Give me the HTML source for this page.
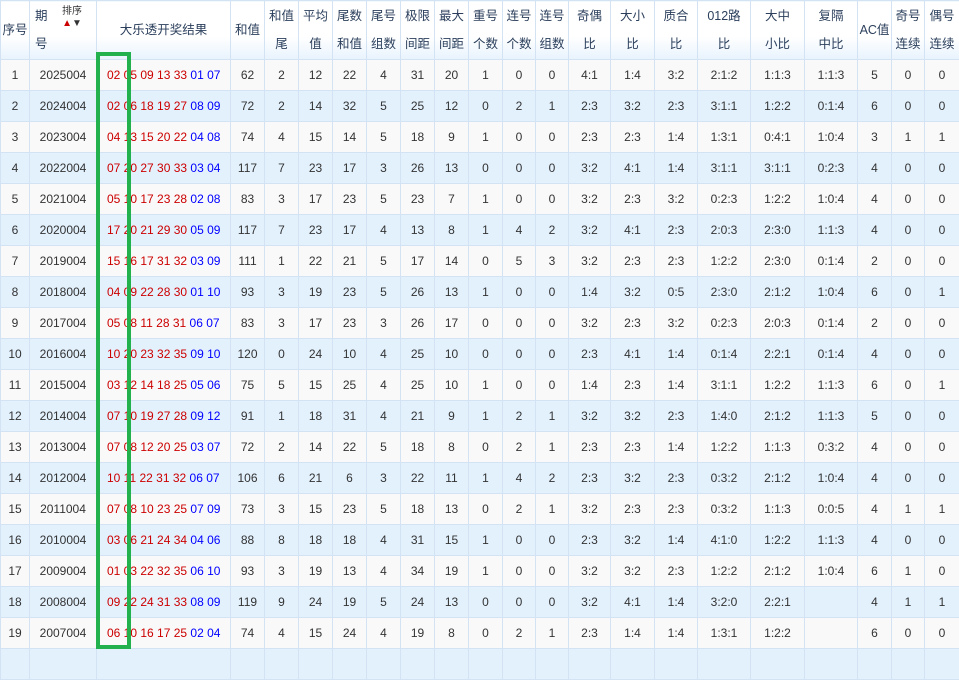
<!DOCTYPE html>
<html><head><meta charset="utf-8">
<style>
body{margin:0;width:959px;height:654px;overflow:hidden;background:#fff;font-family:"Liberation Sans","Noto Sans CJK SC",sans-serif;}
table{border-collapse:collapse;table-layout:fixed;width:959px;position:absolute;left:0;top:0;}
td,th{border:1px solid #d3e3f3;text-align:center;font-size:12px;color:#333;padding:0;height:30px;white-space:nowrap;overflow:hidden;}
th{height:58px;font-weight:normal;color:#2b3f5c;background:linear-gradient(#fff 0%,#fff 60%,#e8f3fd 100%);line-height:28px;font-size:12.5px}
tr.o td{background:#f9f9f9}
tr.e td{background:#e3f1fd}
td.b{text-align:left;padding-left:10px;font-size:12px}
.r{color:#c00}.u{color:#00f}
#g{position:absolute;left:96px;top:52px;width:27px;height:589px;border:4px solid #22b14c;}
.srt{position:absolute;left:61px;top:6px;font-size:10px;color:#333;line-height:12px;text-align:center;width:22px}
</style></head><body>
<table>
<colgroup><col style="width:29px"><col style="width:67px"><col style="width:134px"><col style="width:34px"><col style="width:34px"><col style="width:34px"><col style="width:34px"><col style="width:34px"><col style="width:34px"><col style="width:34px"><col style="width:34px"><col style="width:33px"><col style="width:33px"><col style="width:42px"><col style="width:44px"><col style="width:43px"><col style="width:53px"><col style="width:54px"><col style="width:53px"><col style="width:34px"><col style="width:33px"><col style="width:35px"></colgroup>
<tr><th>序号</th><th style="text-align:left;padding-left:5px">期<br>号</th><th>大乐透开奖结果</th><th>和值</th><th>和值<br>尾</th><th>平均<br>值</th><th>尾数<br>和值</th><th>尾号<br>组数</th><th>极限<br>间距</th><th>最大<br>间距</th><th>重号<br>个数</th><th>连号<br>个数</th><th>连号<br>组数</th><th>奇偶<br>比</th><th>大小<br>比</th><th>质合<br>比</th><th>012路<br>比</th><th>大中<br>小比</th><th>复隔<br>中比</th><th>AC值</th><th>奇号<br>连续</th><th>偶号<br>连续</th></tr>
<tbody id="tb"></tbody>
</table>
<div class="srt">排序<br><span style="color:#c00">▲</span><span style="color:#333">▼</span></div>
<div id="g"></div>
<script>
var d=[
"1 2025004 02,05,09,13,33 01,07 62 2 12 22 4 31 20 1 0 0 4:1 1:4 3:2 2:1:2 1:1:3 1:1:3 5 0 0",
"2 2024004 02,06,18,19,27 08,09 72 2 14 32 5 25 12 0 2 1 2:3 3:2 2:3 3:1:1 1:2:2 0:1:4 6 0 0",
"3 2023004 04,13,15,20,22 04,08 74 4 15 14 5 18 9 1 0 0 2:3 2:3 1:4 1:3:1 0:4:1 1:0:4 3 1 1",
"4 2022004 07,20,27,30,33 03,04 117 7 23 17 3 26 13 0 0 0 3:2 4:1 1:4 3:1:1 3:1:1 0:2:3 4 0 0",
"5 2021004 05,10,17,23,28 02,08 83 3 17 23 5 23 7 1 0 0 3:2 2:3 3:2 0:2:3 1:2:2 1:0:4 4 0 0",
"6 2020004 17,20,21,29,30 05,09 117 7 23 17 4 13 8 1 4 2 3:2 4:1 2:3 2:0:3 2:3:0 1:1:3 4 0 0",
"7 2019004 15,16,17,31,32 03,09 111 1 22 21 5 17 14 0 5 3 3:2 2:3 2:3 1:2:2 2:3:0 0:1:4 2 0 0",
"8 2018004 04,09,22,28,30 01,10 93 3 19 23 5 26 13 1 0 0 1:4 3:2 0:5 2:3:0 2:1:2 1:0:4 6 0 1",
"9 2017004 05,08,11,28,31 06,07 83 3 17 23 3 26 17 0 0 0 3:2 2:3 3:2 0:2:3 2:0:3 0:1:4 2 0 0",
"10 2016004 10,20,23,32,35 09,10 120 0 24 10 4 25 10 0 0 0 2:3 4:1 1:4 0:1:4 2:2:1 0:1:4 4 0 0",
"11 2015004 03,12,14,18,25 05,06 75 5 15 25 4 25 10 1 0 0 1:4 2:3 1:4 3:1:1 1:2:2 1:1:3 6 0 1",
"12 2014004 07,10,19,27,28 09,12 91 1 18 31 4 21 9 1 2 1 3:2 3:2 2:3 1:4:0 2:1:2 1:1:3 5 0 0",
"13 2013004 07,08,12,20,25 03,07 72 2 14 22 5 18 8 0 2 1 2:3 2:3 1:4 1:2:2 1:1:3 0:3:2 4 0 0",
"14 2012004 10,11,22,31,32 06,07 106 6 21 6 3 22 11 1 4 2 2:3 3:2 2:3 0:3:2 2:1:2 1:0:4 4 0 0",
"15 2011004 07,08,10,23,25 07,09 73 3 15 23 5 18 13 0 2 1 3:2 2:3 2:3 0:3:2 1:1:3 0:0:5 4 1 1",
"16 2010004 03,06,21,24,34 04,06 88 8 18 18 4 31 15 1 0 0 2:3 3:2 1:4 4:1:0 1:2:2 1:1:3 4 0 0",
"17 2009004 01,03,22,32,35 06,10 93 3 19 13 4 34 19 1 0 0 3:2 3:2 2:3 1:2:2 2:1:2 1:0:4 6 1 0",
"18 2008004 09,22,24,31,33 08,09 119 9 24 19 5 24 13 0 0 0 3:2 4:1 1:4 3:2:0 2:2:1 - 4 1 1",
"19 2007004 06,10,16,17,25 02,04 74 4 15 24 4 19 8 0 2 1 2:3 1:4 1:4 1:3:1 1:2:2 - 6 0 0",
"20 2006004 - - - - - - - - - - - - - - - - - - - - -"];
var h="";
d.forEach(function(l,i){var p=l.split(" ");h+='<tr class="'+(i%2?'e':'o')+'">';
p.forEach(function(v,j){ if(j==2){h+='<td class="b">'+(v=='-'?'':'<span class="r">'+v.split(',').join(' ')+'</span> <span class="u">'+p[3].split(',').join(' ')+'</span>')+'</td>';return;}
 if(j==3)return; if(j==0)v=(i==19?'':v); if(j==1&&i==19)v='';
 h+='<td>'+(v=='-'?'':v)+'</td>';});h+='</tr>';});
document.getElementById('tb').innerHTML=h;
</script>
</body></html>
